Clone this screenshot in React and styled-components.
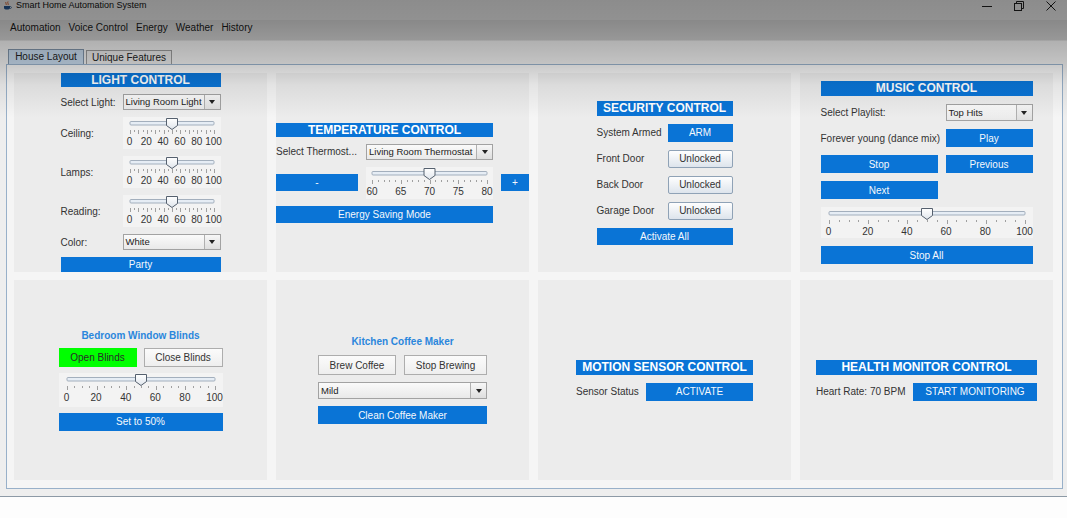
import React from 'react';
import styled, { createGlobalStyle } from 'styled-components';

const GlobalStyle = createGlobalStyle`
  html, body {
    margin: 0;
    padding: 0;
    background: #fdfdfd;
  }
  body {
    font-family: "Liberation Sans", Arial, sans-serif;
    font-size: 10px;
    color: #333;
  }
`;

const BLUE = '#0a74d6';

const Window = styled.div`
  position: relative;
  width: 1067px;
  height: 496px;
  background: #eeeeee;
  border-bottom: 1px solid #8d9aa6;
  overflow: hidden;
`;

// the screenshot fades darker towards its top edge
const Shade = styled.div`
  position: absolute;
  left: 0;
  top: 0;
  right: 0;
  height: 120px;
  pointer-events: none;
  z-index: 10;
  background: linear-gradient(
    to bottom,
    rgba(0, 0, 0, 0.45) 0px,
    rgba(0, 0, 0, 0.43) 20px,
    rgba(0, 0, 0, 0.37) 40px,
    rgba(0, 0, 0, 0.26) 41px,
    rgba(0, 0, 0, 0.18) 64px,
    rgba(0, 0, 0, 0.07) 85px,
    rgba(0, 0, 0, 0) 118px
  );
`;

const TitleBar = styled.div`
  height: 20px;
  background: #ffffff;
  display: flex;
  align-items: flex-start;
  padding-left: 3px;
`;

const TitleText = styled.span`
  font-size: 9px;
  line-height: 11px;
  margin-left: 4px;
  color: #111;
`;

const WindowButtons = styled.div`
  margin-left: auto;
  display: flex;
`;

const WinButton = styled.div`
  width: 32px;
  height: 12px;
  display: flex;
  align-items: center;
  justify-content: center;
`;

const MenuBar = styled.div`
  height: 20px;
  background: #f0f0f0;
  display: flex;
  align-items: flex-start;
  padding: 2px 0 0 10px;
  box-sizing: border-box;
  gap: 8px;
`;

const MenuItem = styled.span`
  font-size: 10px;
  line-height: 12px;
  color: #1a1a1a;
`;

const TabStrip = styled.div`
  height: 24px;
  display: flex;
  align-items: flex-end;
  padding-left: 8px;
  gap: 2px;
`;

const Tab = styled.div`
  height: ${(p) => (p.$active ? 15 : 14)}px;
  width: ${(p) => p.$w}px;
  box-sizing: border-box;
  border: 1px solid ${(p) => (p.$active ? '#7f93a8' : '#9a9a9a')};
  border-bottom: none;
  background: ${(p) => (p.$active ? '#c6d9ec' : '#e8e8e8')};
  font-size: 10px;
  line-height: 13px;
  text-align: center;
  color: #222;
`;

const Panel = styled.div`
  margin-left: 6px;
  width: 1057px;
  box-sizing: border-box;
  border: 1px solid #98b0c9;
  background: #f5f5f5;
  padding: 8px 9px 8px 7px;
  display: grid;
  grid-template-columns: repeat(4, 253px);
  grid-template-rows: 199px 200px;
  gap: 8px 9px;
`;

const Cell = styled.div`
  background: #ececec;
  display: flex;
  align-items: center;
  justify-content: center;
`;

const Grid = styled.div`
  display: grid;
  grid-template-columns: ${(p) => p.$cols};
  column-gap: ${(p) => p.$cg || 0}px;
  row-gap: ${(p) => p.$rg || 7}px;
  align-items: center;
`;

const Header = styled.div`
  grid-column: ${(p) => p.$col || '1 / -1'};
  height: ${(p) => p.$h || 15}px;
  line-height: ${(p) => p.$h || 15}px;
  background: ${BLUE};
  color: #fff;
  font-weight: bold;
  font-size: 12px;
  text-align: center;
  white-space: nowrap;
`;

const SubTitle = styled.div`
  grid-column: 1 / -1;
  text-align: center;
  font-weight: bold;
  font-size: 10px;
  line-height: 12px;
  color: #2a86dc;
`;

const Label = styled.span`
  grid-column: ${(p) => p.$col || 'auto'};
  font-size: 10px;
  color: #333;
  white-space: nowrap;
`;

const Button = styled.div`
  grid-column: ${(p) => p.$col || 'auto'};
  height: ${(p) => p.$h || 18}px;
  box-sizing: border-box;
  display: flex;
  align-items: center;
  justify-content: center;
  font-size: 10px;
  white-space: nowrap;
  ${(p) =>
    p.$kind === 'light'
      ? `background: linear-gradient(#fefefe, #dde4ec); border: 1px solid #8fa2b6; border-radius: 2px; color: #333;`
      : p.$kind === 'plain'
      ? `background: linear-gradient(#fbfbfb, #eeeeee); border: 1px solid #adadad; color: #333;`
      : p.$kind === 'green'
      ? `background: #00ff00; color: #2a2a2a;`
      : `background: ${BLUE}; color: #f4f8fc;`}
`;

const ComboBox = styled.div`
  grid-column: ${(p) => p.$col || 'auto'};
  height: ${(p) => p.$h || 16}px;
  box-sizing: border-box;
  display: flex;
  border: 1px solid #a2a2a2;
  background: linear-gradient(#fafafa, #e9e9e9);
`;

const ComboText = styled.span`
  flex: 1;
  padding-left: 2px;
  font-size: 9.5px;
  line-height: ${(p) => (p.$h || 16) - 2}px;
  color: #222;
  white-space: nowrap;
  overflow: hidden;
`;

const ComboArrow = styled.span`
  width: 15px;
  flex: none;
  border-left: 1px solid #b0b0b0;
  background: linear-gradient(#f7f7f7, #dedede);
  display: flex;
  align-items: center;
  justify-content: center;
  &::after {
    content: '';
    border-left: 3.5px solid transparent;
    border-right: 3.5px solid transparent;
    border-top: 4px solid #222;
  }
`;

const SliderBox = styled.div`
  position: relative;
  grid-column: ${(p) => p.$col || 'auto'};
  width: ${(p) => p.$w}px;
  height: ${(p) => p.$h || 32}px;
  background: #f3f3f3;
`;

const ScaleLabel = styled.span`
  position: absolute;
  top: 19px;
  transform: translateX(-50%);
  font-size: 10px;
  line-height: 11px;
  color: #333;
`;

function Combo({ text, h, col }) {
  return (
    <ComboBox $h={h} $col={col}>
      <ComboText $h={h}>{text}</ComboText>
      <ComboArrow />
    </ComboBox>
  );
}

function Slider({ w, min, max, value, step, tick, major, pad = 7, col, h }) {
  const inner = w - pad * 2;
  const x = (v) => pad + ((v - min) / (max - min)) * inner;
  const ticks = [];
  for (let v = min; v <= max; v += tick) ticks.push(v);
  const labels = [];
  for (let v = min; v <= max; v += step) labels.push(v);
  const t = x(value);
  return (
    <SliderBox $w={w} $col={col} $h={h}>
      <svg width={w} height={18} style={{ display: 'block' }}>
        <defs>
          <linearGradient id="thumbFill" x1="0" y1="0" x2="0" y2="1">
            <stop offset="0" stopColor="#ffffff" />
            <stop offset="1" stopColor="#dfe5ec" />
          </linearGradient>
        </defs>
        <rect x={pad} y={4.5} width={inner} height={3.5} rx={1} fill="#e6edf5" stroke="#a3afbd" />
        {ticks.map((v) => (
          <line
            key={v}
            x1={Math.round(x(v)) + 0.5}
            x2={Math.round(x(v)) + 0.5}
            y1={13}
            y2={(v - min) % major === 0 ? 17 : 15}
            stroke="#a0a0a0"
          />
        ))}
        <polygon
          points={`${t - 5.5},1.5 ${t + 5.5},1.5 ${t + 5.5},8.5 ${t},12.5 ${t - 5.5},8.5`}
          fill="url(#thumbFill)"
          stroke="#55606e"
        />
      </svg>
      {labels.map((v) => (
        <ScaleLabel key={v} style={{ left: x(v) }}>
          {v}
        </ScaleLabel>
      ))}
    </SliderBox>
  );
}

function JavaIcon() {
  return (
    <svg width="9" height="10" viewBox="0 0 9 10" style={{ marginTop: 1 }}>
      <path d="M3 1 C2 2 4 3 3 4 M5 0.5 C4 2 6 3 5 4" stroke="#e05a1a" strokeWidth="0.9" fill="none" />
      <path d="M1 5 H7 V7 C7 9 1 9 1 7 Z" fill="#2a5d9a" />
      <path d="M7 5.5 C9 5.5 9 7.5 7 7.5" stroke="#2a5d9a" strokeWidth="0.8" fill="none" />
    </svg>
  );
}

function LightControl() {
  return (
    <Grid $cols="62px 98px" $rg={7}>
      <Header $h={14}>LIGHT CONTROL</Header>
      <Label>Select Light:</Label>
      <Combo text="Living Room Light" />
      <Label>Ceiling:</Label>
      <Slider w={98} min={0} max={100} value={50} step={20} tick={5} major={10} />
      <Label>Lamps:</Label>
      <Slider w={98} min={0} max={100} value={50} step={20} tick={5} major={10} />
      <Label>Reading:</Label>
      <Slider w={98} min={0} max={100} value={50} step={20} tick={5} major={10} />
      <Label>Color:</Label>
      <Combo text="White" />
      <Button $col="1 / -1" $h={15}>Party</Button>
    </Grid>
  );
}

function TemperatureControl() {
  return (
    <Grid $cols="82px 127px 28px" $cg={8} $rg={7}>
      <Header $h={14} $col="1 / 3">TEMPERATURE CONTROL</Header>
      <Label $col="1">Select Thermost...</Label>
      <Combo text="Living Room Thermostat" col="2" />
      <Button $h={17} $col="1">-</Button>
      <Slider w={127} min={60} max={80} value={70} step={5} tick={1} major={5} pad={6} col="2" />
      <Button $h={17} $col="3">+</Button>
      <Button $h={17} $col="1 / 3">Energy Saving Mode</Button>
    </Grid>
  );
}

function SecurityControl() {
  return (
    <Grid $cols="71px 65px" $rg={8}>
      <Header>SECURITY CONTROL</Header>
      <Label>System Armed</Label>
      <Button>ARM</Button>
      <Label>Front Door</Label>
      <Button $kind="light">Unlocked</Button>
      <Label>Back Door</Label>
      <Button $kind="light">Unlocked</Button>
      <Label>Garage Door</Label>
      <Button $kind="light">Unlocked</Button>
      <Button $col="1 / -1" $h={17}>Activate All</Button>
    </Grid>
  );
}

function MusicControl() {
  return (
    <Grid $cols="117px 87px" $cg={8} $rg={8}>
      <Header>MUSIC CONTROL</Header>
      <Label>Select Playlist:</Label>
      <Combo text="Top Hits" h={17} />
      <Label>Forever young (dance mix)</Label>
      <Button>Play</Button>
      <Button>Stop</Button>
      <Button>Previous</Button>
      <Button $col="1">Next</Button>
      <Slider w={212} col="1 / -1" min={0} max={100} value={50} step={20} tick={5} major={20} pad={8} h={31} />
      <Button $col="1 / -1">Stop All</Button>
    </Grid>
  );
}

function BlindsControl() {
  return (
    <Grid $cols="78px 79px" $cg={7} $rg={6}>
      <SubTitle>Bedroom Window Blinds</SubTitle>
      <Button $kind="green" $h={19}>Open Blinds</Button>
      <Button $kind="plain" $h={19}>Close Blinds</Button>
      <Slider w={164} col="1 / -1" min={0} max={100} value={50} step={20} tick={5} major={20} pad={8} h={34} />
      <Button $col="1 / -1">Set to 50%</Button>
    </Grid>
  );
}

function CoffeeControl() {
  return (
    <Grid $cols="78px 83px" $cg={8} $rg={7}>
      <SubTitle>Kitchen Coffee Maker</SubTitle>
      <Button $kind="plain" $h={20}>Brew Coffee</Button>
      <Button $kind="plain" $h={20}>Stop Brewing</Button>
      <Combo col="1 / -1" text="Mild" h={17} />
      <Button $col="1 / -1">Clean Coffee Maker</Button>
    </Grid>
  );
}

function MotionControl() {
  return (
    <Grid $cols="63px 107px" $cg={7} $rg={8}>
      <Header>MOTION SENSOR CONTROL</Header>
      <Label>Sensor Status</Label>
      <Button>ACTIVATE</Button>
    </Grid>
  );
}

function HealthControl() {
  return (
    <Grid $cols="90px 124px" $cg={7} $rg={8}>
      <Header>HEALTH MONITOR CONTROL</Header>
      <Label>Heart Rate: 70 BPM</Label>
      <Button>START MONITORING</Button>
    </Grid>
  );
}

export default function App() {
  return (
    <>
      <GlobalStyle />
      <Window>
        <Shade />
        <TitleBar>
          <JavaIcon />
          <TitleText>Smart Home Automation System</TitleText>
          <WindowButtons>
            <WinButton>
              <svg width="10" height="10" viewBox="0 0 10 10">
                <line x1="0" y1="5.5" x2="10" y2="5.5" stroke="#222" />
              </svg>
            </WinButton>
            <WinButton>
              <svg width="10" height="10" viewBox="0 0 10 10">
                <rect x="0.5" y="2.5" width="7" height="7" fill="none" stroke="#222" />
                <path d="M2.5 2.5 V0.5 H9.5 V7.5 H7.5" fill="none" stroke="#222" />
              </svg>
            </WinButton>
            <WinButton>
              <svg width="10" height="10" viewBox="0 0 10 10">
                <path d="M0.5 0.5 L9.5 9.5 M9.5 0.5 L0.5 9.5" stroke="#222" />
              </svg>
            </WinButton>
          </WindowButtons>
        </TitleBar>
        <MenuBar>
          <MenuItem>Automation</MenuItem>
          <MenuItem>Voice Control</MenuItem>
          <MenuItem>Energy</MenuItem>
          <MenuItem>Weather</MenuItem>
          <MenuItem>History</MenuItem>
        </MenuBar>
        <TabStrip>
          <Tab $active $w={76}>House Layout</Tab>
          <Tab $w={86}>Unique Features</Tab>
        </TabStrip>
        <Panel>
          <Cell><LightControl /></Cell>
          <Cell><TemperatureControl /></Cell>
          <Cell><SecurityControl /></Cell>
          <Cell><MusicControl /></Cell>
          <Cell><BlindsControl /></Cell>
          <Cell><CoffeeControl /></Cell>
          <Cell><MotionControl /></Cell>
          <Cell><HealthControl /></Cell>
        </Panel>
      </Window>
    </>
  );
}
